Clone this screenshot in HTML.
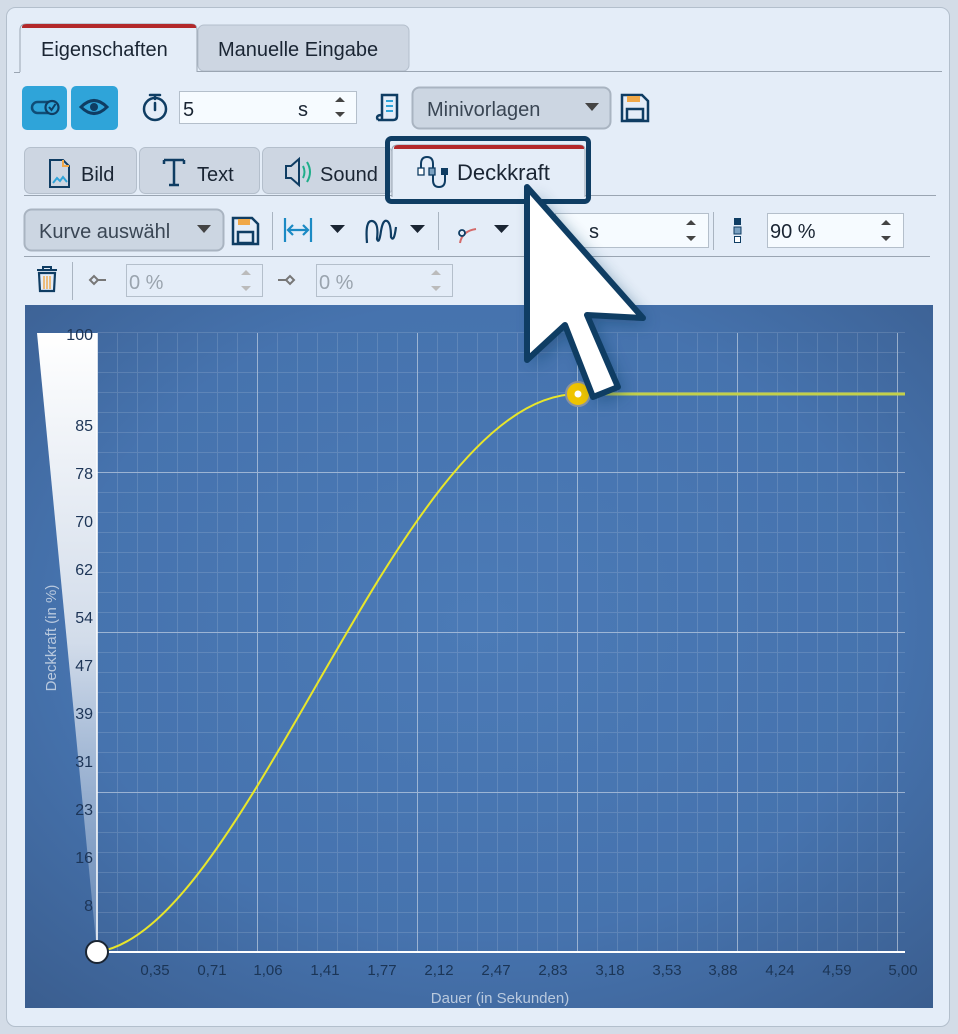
<!DOCTYPE html>
<html><head><meta charset="utf-8"><style>
html,body{margin:0;padding:0;background:#d3dce7;}
svg{display:block;font-family:"Liberation Sans",sans-serif;}
</style></head><body>
<svg width="958" height="1034" viewBox="0 0 958 1034" xmlns="http://www.w3.org/2000/svg">
<defs>
<radialGradient id="bg" cx="0.5" cy="0.45" r="0.75">
<stop offset="0" stop-color="#4b7ab6"/><stop offset="0.6" stop-color="#4673ae"/><stop offset="1" stop-color="#3a5d8e"/>
</radialGradient>
<linearGradient id="wedge" x1="0" y1="0" x2="0" y2="1">
<stop offset="0" stop-color="#ffffff"/><stop offset="0.5" stop-color="#d2dcea"/><stop offset="1" stop-color="#8fa9cc" stop-opacity="0.5"/>
</linearGradient>
<pattern id="minor" x="97" y="332" width="20" height="20" patternUnits="userSpaceOnUse">
<path d="M0.5 0V20M0 0.5H20" stroke="#ffffff" stroke-opacity="0.13" stroke-width="1" fill="none"/>
</pattern>
<filter id="sh" x="-30%" y="-30%" width="160%" height="160%"><feGaussianBlur stdDeviation="8"/></filter>
</defs>
<rect x="6.5" y="7.5" width="943" height="1019" rx="9" fill="#e4edf8" stroke="#b3bfcc"/>

<!-- top tabs -->
<path d="M20 72V30q0-6 6-6h165q6 0 6 6v42" fill="#e4edf8" stroke="#9aa5b2"/>
<path d="M22 27q0-3 5-3h164q5 0 5 3v1H22z" fill="#b3282a"/>
<rect x="198" y="25" width="211" height="46" rx="6" fill="#cdd6e2" stroke="#b4bfcc"/>
<line x1="197" y1="71.5" x2="942" y2="71.5" stroke="#9aa5b2"/>
<line x1="14" y1="72.5" x2="20" y2="72.5" stroke="#9aa5b2"/>
<text x="41" y="56" font-size="20" fill="#1a2533">Eigenschaften</text>
<text x="218" y="56" font-size="20" fill="#1a2533">Manuelle Eingabe</text>

<!-- row 2 -->
<rect x="22" y="86" width="45" height="44" rx="5" fill="#2fa4d9"/>
<rect x="71" y="86" width="47" height="44" rx="5" fill="#2fa4d9"/>
<rect x="32" y="102" width="22" height="11" rx="5.5" fill="none" stroke="#0f4d77" stroke-width="2.5"/>
<circle cx="52" cy="107.5" r="6.5" fill="#2fa4d9" stroke="#0f3d63" stroke-width="2.2"/>
<path d="M49 107l2.5 3 4-6" stroke="#0f3d63" stroke-width="2" fill="none"/>
<path d="M81 107q13-13 26 0q-13 13-26 0z" fill="none" stroke="#0f3d63" stroke-width="3"/>
<circle cx="94" cy="107" r="4" fill="#0f3d63"/>
<circle cx="155" cy="109" r="11" fill="none" stroke="#0f3d63" stroke-width="2.5"/>
<path d="M150 95h10M155 95v4M155 103v7" stroke="#0f3d63" stroke-width="2.5" stroke-linecap="round"/>
<rect x="179.5" y="91.5" width="177" height="32" fill="#f6fbff" stroke="#b4bfcb"/>
<text x="183" y="116" font-size="20" fill="#1a2533">5</text>
<text x="298" y="116" font-size="20" fill="#1a2533">s</text>
<path d="M335 102l5-5 5 5z M335 112l5 5 5-5z" fill="#444"/>
<path d="M378 120h15q4 0 4-4V95h-15v24" fill="none" stroke="#0f3d63" stroke-width="2.5"/>
<path d="M378 120q-3-5 4-5" fill="none" stroke="#0f3d63" stroke-width="2.5"/>
<path d="M386 101h7M386 106h7M386 111h7" stroke="#2fa4d9" stroke-width="2"/>
<rect x="412.5" y="87.5" width="198" height="41" rx="7" fill="#ccd6e2" stroke="#a9b4c1" stroke-width="2"/>
<text x="427" y="116" font-size="20" fill="#3a4654">Minivorlagen</text>
<path d="M585 103h14l-7 8z" fill="#444"/>
<path d="M622 95h20l6 6v20h-26z" fill="none" stroke="#0f3d63" stroke-width="2.5"/>
<rect x="627" y="96" width="13" height="6" fill="#f0a848"/>
<rect x="627" y="109" width="16" height="11" fill="none" stroke="#0f3d63" stroke-width="2.5"/>

<!-- sub tabs -->
<rect x="24.5" y="147.5" width="112" height="46" rx="6" fill="#cdd6e2" stroke="#b4bfcc"/>
<rect x="139.5" y="147.5" width="120" height="46" rx="6" fill="#cdd6e2" stroke="#b4bfcc"/>
<rect x="262.5" y="147.5" width="130" height="46" rx="6" fill="#cdd6e2" stroke="#b4bfcc"/>
<line x1="24" y1="195.5" x2="936" y2="195.5" stroke="#9aa5b2"/>
<path d="M392 197V150q0-5 6-5h181q6 0 6 5v47" fill="#e4edf8" stroke="#9aa5b2"/>
<path d="M394 148q0-3 5-3h180q5 0 5 3v1H394z" fill="#b3282a"/>
<path d="M50 160h13l6 6v21H50z" fill="none" stroke="#0f3d63" stroke-width="2"/>
<path d="M63 160v6h6" fill="none" stroke="#f0a848" stroke-width="2"/>
<path d="M53 183l4-5 3 3 3-4 4 5" fill="none" stroke="#2fa4d9" stroke-width="2"/>
<text x="81" y="181" font-size="20" fill="#1a2533">Bild</text>
<path d="M164 160h20M174 160v25M169 185h10M164 160v4M184 160v4" stroke="#0f3d63" stroke-width="2.5" fill="none"/>
<text x="197" y="181" font-size="20" fill="#1a2533">Text</text>
<path d="M286 166h5l8-7v26l-8-7h-5z" fill="none" stroke="#0f3d63" stroke-width="2"/>
<path d="M303 166q3 6 0 12M307 162q6 10 0 20" fill="none" stroke="#1fae8a" stroke-width="2"/>
<text x="320" y="181" font-size="20" fill="#1a2533">Sound</text>
<path d="M421 172v-8q0-7 6-7t6 7v16q0 7 6 7t6-7v-8" fill="none" stroke="#0f3d63" stroke-width="2"/>
<rect x="418" y="168" width="6" height="7" fill="#fff" stroke="#0f3d63" stroke-width="1.3"/>
<rect x="429" y="168" width="6" height="7" fill="#7aa0c0" stroke="#0f3d63" stroke-width="1.3"/>
<rect x="441" y="168" width="7" height="7" fill="#0f3d63"/>
<text x="457" y="180" font-size="22" fill="#1a2533">Deckkraft</text>
<rect x="387.5" y="138.5" width="201" height="63" rx="4" fill="none" stroke="#0f3d63" stroke-width="5"/>

<!-- row 3 -->
<rect x="24.5" y="209.5" width="199" height="41" rx="7" fill="#ccd6e2" stroke="#a9b4c1" stroke-width="2"/>
<text x="39" y="238" font-size="20" fill="#3a4654">Kurve auswähl</text>
<path d="M197 225h14l-7 8z" fill="#444"/>
<path d="M233 218h19l6 6v20h-25z" fill="none" stroke="#0f3d63" stroke-width="2.5"/>
<rect x="238" y="219" width="12" height="6" fill="#f0a848"/>
<rect x="238" y="232" width="15" height="11" fill="none" stroke="#0f3d63" stroke-width="2.5"/>
<line x1="272.5" y1="212" x2="272.5" y2="250" stroke="#a9b4c1"/>
<path d="M285 218v24M311 218v24M289 230h18M293 225l-5 5 5 5M303 225l5 5-5 5" fill="none" stroke="#1b8ac4" stroke-width="2.2"/>
<path d="M330 225h15l-7.5 8z" fill="#1a2533"/>
<path d="M367 243q-2-23 5-22t5 18q2 6 4-8q2-12 6-10t4 16q3 6 5-10" fill="none" stroke="#0f3d63" stroke-width="2.2"/>
<path d="M410 225h15l-7.5 8z" fill="#1a2533"/>
<line x1="438.5" y1="212" x2="438.5" y2="250" stroke="#a9b4c1"/>
<path d="M460 243q2-12 16-14" fill="none" stroke="#d46a6a" stroke-width="2"/>
<circle cx="462" cy="233" r="3" fill="#e4edf8" stroke="#0f3d63" stroke-width="1.8"/>
<path d="M494 225h15l-7.5 8z" fill="#1a2533"/>
<circle cx="540" cy="231" r="11" fill="none" stroke="#0f3d63" stroke-width="2.5"/>
<rect x="555.5" y="213.5" width="153" height="34" fill="#f6fbff" stroke="#b4bfcb"/>
<text x="589" y="238" font-size="20" fill="#1a2533">s</text>
<path d="M686 225l5-5 5 5z M686 236l5 5 5-5z" fill="#444"/>
<line x1="713.5" y1="212" x2="713.5" y2="250" stroke="#a9b4c1"/>
<rect x="734" y="218" width="7" height="7" fill="#0f3d63"/>
<rect x="734" y="227" width="7" height="7" fill="#7aa0c0" stroke="#0f3d63" stroke-width="1"/>
<rect x="734.5" y="236.5" width="6" height="6" fill="#fff" stroke="#0f3d63" stroke-width="1"/>
<rect x="767.5" y="213.5" width="136" height="34" fill="#f6fbff" stroke="#b4bfcb"/>
<text x="770" y="238" font-size="20" fill="#1a2533">90 %</text>
<path d="M881 225l5-5 5 5z M881 236l5 5 5-5z" fill="#444"/>
<line x1="24" y1="256.5" x2="930" y2="256.5" stroke="#9aa5b2"/>

<!-- row 4 -->
<path d="M37 270h20M43 270v-3h8v3" fill="none" stroke="#0f3d63" stroke-width="2"/>
<path d="M39 273h16l-1 18h-14z" fill="none" stroke="#0f3d63" stroke-width="2.2"/>
<path d="M44 276v13M47 276v13M50 276v13" stroke="#f0a848" stroke-width="1.4"/>
<line x1="72.5" y1="262" x2="72.5" y2="300" stroke="#a9b4c1"/>
<path d="M90 280l4-4 4 4-4 4z" fill="none" stroke="#777" stroke-width="2"/>
<line x1="98" y1="280" x2="106" y2="280" stroke="#777" stroke-width="2"/>
<rect x="126.5" y="264.5" width="136" height="32" fill="#e4edf8" stroke="#b4bfcb"/>
<text x="129" y="289" font-size="20" fill="#9aa4ae">0 %</text>
<path d="M241 275l5-5 5 5z M241 286l5 5 5-5z" fill="#bbb"/>
<line x1="278" y1="280" x2="286" y2="280" stroke="#777" stroke-width="2"/>
<path d="M286 280l4-4 4 4-4 4z" fill="none" stroke="#777" stroke-width="2"/>
<rect x="316.5" y="264.5" width="136" height="32" fill="#e4edf8" stroke="#b4bfcb"/>
<text x="319" y="289" font-size="20" fill="#9aa4ae">0 %</text>
<path d="M431 275l5-5 5 5z M431 286l5 5 5-5z" fill="#bbb"/>

<!-- graph -->
<rect x="25" y="305" width="908" height="703" fill="url(#bg)"/>
<rect x="97" y="332" width="808" height="620" fill="url(#minor)"/>
<path d="M257.5 333V952M417.5 333V952M577.5 333V952M737.5 333V952M897.5 333V952M97 472.5H905M97 632.5H905M97 792.5H905" stroke="#ffffff" stroke-opacity="0.38"/>
<polygon points="37,333 97,333 97,952" fill="url(#wedge)"/>
<line x1="97" y1="333" x2="97" y2="952" stroke="#fff" stroke-width="1.5"/>
<line x1="97" y1="952" x2="905" y2="952" stroke="#fff" stroke-width="2"/>
<g font-size="16" fill="#1d3557" text-anchor="end">
<text x="93" y="340">100</text><text x="93" y="431">85</text><text x="93" y="479">78</text><text x="93" y="527">70</text><text x="93" y="575">62</text><text x="93" y="623">54</text><text x="93" y="671">47</text><text x="93" y="719">39</text><text x="93" y="767">31</text><text x="93" y="815">23</text><text x="93" y="863">16</text><text x="93" y="911">8</text>
</g>
<text transform="translate(56,638) rotate(-90)" font-size="15" fill="#b9c9de" text-anchor="middle">Deckkraft (in %)</text>
<g font-size="15" fill="#1b3556" text-anchor="middle">
<text x="155" y="975">0,35</text><text x="212" y="975">0,71</text><text x="268" y="975">1,06</text><text x="325" y="975">1,41</text><text x="382" y="975">1,77</text><text x="439" y="975">2,12</text><text x="496" y="975">2,47</text><text x="553" y="975">2,83</text><text x="610" y="975">3,18</text><text x="667" y="975">3,53</text><text x="723" y="975">3,88</text><text x="780" y="975">4,24</text><text x="837" y="975">4,59</text><text x="903" y="975">5,00</text>
</g>
<text x="500" y="1003" font-size="15" fill="#b9c9de" text-anchor="middle">Dauer (in Sekunden)</text>
<path d="M97 952C250 930 400 394 578 394" fill="none" stroke="#e8e62a" stroke-width="2"/>
<line x1="588" y1="394" x2="905" y2="394" stroke="#c3d04a" stroke-width="3"/>
<circle cx="578" cy="394" r="12" fill="#efc400" stroke="#8a93a0" stroke-width="2"/>
<circle cx="578" cy="394" r="3.5" fill="#fff"/>
<circle cx="97" cy="952" r="11" fill="#fff" stroke="#1a2533" stroke-width="2"/>

<!-- cursor -->
<polygon points="527,187 527,360 565,325 593,397 618,387 587,315 643,318" fill="#0f3d63" opacity="0.45" filter="url(#sh)" transform="translate(6,6)"/>
<polygon points="527,187 527,360 565,325 593,397 618,387 587,315 643,318" fill="#fff" stroke="#0f3d63" stroke-width="6" stroke-linejoin="round"/>
</svg>
</body></html>
